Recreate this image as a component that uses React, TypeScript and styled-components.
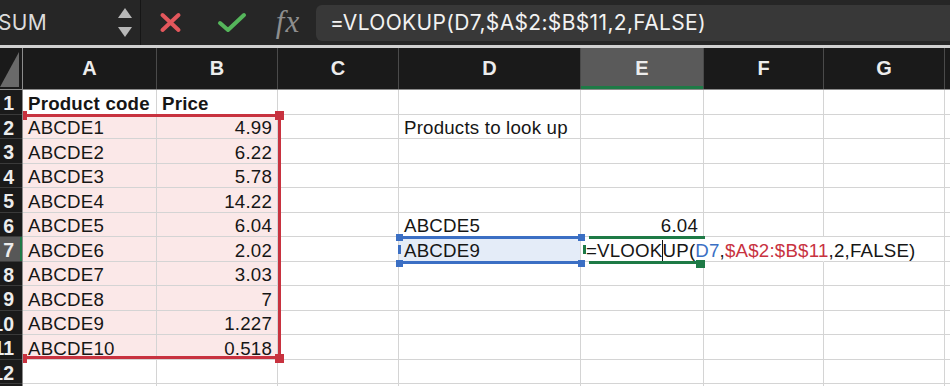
import React from 'react';
import styled, { createGlobalStyle, css } from 'styled-components';

const GlobalStyle = createGlobalStyle`
  html, body {
    margin: 0;
    padding: 0;
    background: #ffffff;
    overflow: hidden;
  }
  * {
    box-sizing: border-box;
  }
`;

const COL_WIDTHS = [134, 121, 121, 182, 123, 120, 121, 121];
const COL_NAMES = ['A', 'B', 'C', 'D', 'E', 'F', 'G', 'H'];
const ROW_H = 24.5;
const ROW_COUNT = 13;

const RED = '#c8323f';
const BLUE = '#3b6fc4';
const GREEN = '#1e7a46';

const cellFont = `"Liberation Sans", Arial, Helvetica, sans-serif`;

const Window = styled.div`
  width: 950px;
  height: 386px;
  overflow: hidden;
  display: flex;
  flex-direction: column;
  background: #ffffff;
`;

/* ---------- formula toolbar ---------- */

const Toolbar = styled.div`
  height: 45px;
  flex: none;
  display: flex;
  align-items: center;
  background: #262626;
  border-bottom: 3px solid #d0d0d0;
  box-sizing: content-box;
`;

const NameBox = styled.div`
  width: 141px;
  height: 100%;
  display: flex;
  align-items: center;
  justify-content: space-between;
  padding-right: 8px;
  border-right: 1px solid #161616;
`;

const NameText = styled.span`
  margin-left: -2px;
  font-family: Inter, "Liberation Sans", sans-serif;
  font-size: 21px;
  letter-spacing: 0.3px;
  color: #dcdcdc;
`;

const Stepper = styled.div`
  display: flex;
  flex-direction: column;
  gap: 9px;
`;

const Arrow = styled.span<{ $down?: boolean }>`
  width: 0;
  height: 0;
  border-left: 7.5px solid transparent;
  border-right: 7.5px solid transparent;
  ${(p) =>
    p.$down
      ? css`border-top: 10px solid #b8b8b8;`
      : css`border-bottom: 10px solid #b8b8b8;`}
`;

const IconSlot = styled.div<{ $w: number }>`
  width: ${(p) => p.$w}px;
  height: 100%;
  display: flex;
  align-items: center;
  justify-content: center;
  flex: none;
`;

const FxLabel = styled.span`
  font-family: "Liberation Serif", "Times New Roman", serif;
  font-style: italic;
  font-size: 31px;
  color: #8e8e8e;
  letter-spacing: 1px;
  line-height: 1;
  margin-top: -2px;
`;

const FormulaInput = styled.div`
  flex: 1;
  height: 36px;
  margin-left: 4px;
  display: flex;
  align-items: center;
  padding-left: 14px;
  background: #383838;
  border-radius: 6px 0 0 6px;
  font-family: Inter, "Liberation Sans", sans-serif;
  font-size: 21px;
  letter-spacing: 0.35px;
  color: #f2f2f2;
  white-space: nowrap;
`;

/* ---------- column header ---------- */

const HeaderRow = styled.div`
  height: 42px;
  flex: none;
  display: grid;
  grid-template-columns: 23px ${COL_WIDTHS.map((w) => `${w}px`).join(' ')};
  background: #1a1a1a;
  border-bottom: 1px solid #8c8c8c;
`;

const Corner = styled.div`
  position: relative;
  border-right: 1px solid #8c8c8c;

  &::after {
    content: '';
    position: absolute;
    left: 0;
    right: 3px;
    top: 4px;
    bottom: 2px;
    background: #6a6a6a;
    clip-path: polygon(100% 0, 100% 100%, 0 100%);
  }
`;

const ColumnHeader = styled.div<{ $active?: boolean }>`
  display: flex;
  align-items: center;
  justify-content: center;
  border-right: 1px solid #4a4a4a;
  font-family: ${cellFont};
  font-weight: 700;
  font-size: 20px;
  color: #ececec;
  overflow: hidden;
  ${(p) =>
    p.$active &&
    css`
      background: #5a5a5a;
      box-shadow: inset 0 -3px 0 ${GREEN};
    `}
`;

/* ---------- sheet body ---------- */

const Body = styled.div`
  flex: 1;
  display: flex;
  overflow: hidden;
`;

const RowHeaderColumn = styled.div`
  width: 23px;
  flex: none;
  background: #1a1a1a;
  border-right: 1px solid #8c8c8c;
`;

const RowHeader = styled.div<{ $active?: boolean }>`
  height: ${ROW_H}px;
  display: flex;
  align-items: flex-end;
  justify-content: flex-end;
  padding-right: 8px;
  border-bottom: 1px solid #3a3a3a;
  font-family: ${cellFont};
  font-weight: 700;
  font-size: 19.5px;
  line-height: 1;
  color: #ececec;
  white-space: nowrap;
  overflow: hidden;
  ${(p) =>
    p.$active &&
    css`
      background: #575757;
      box-shadow: inset -2px 0 0 ${GREEN};
    `}
`;

const CellArea = styled.div`
  position: relative;
  flex: 1;
  overflow: hidden;
  display: grid;
  grid-template-columns: ${COL_WIDTHS.map((w) => `${w}px`).join(' ')};
  grid-auto-rows: ${ROW_H}px;
`;

type Tint = 'pink' | 'blue';

const Cell = styled.div<{ $right?: boolean; $bold?: boolean; $tint?: Tint; $noLine?: boolean }>`
  display: flex;
  align-items: flex-end;
  justify-content: ${(p) => (p.$right ? 'flex-end' : 'flex-start')};
  padding: 0 5px;
  border-bottom: 1px solid #d4d4d4;
  border-right: 1px solid ${(p) => (p.$noLine ? 'transparent' : '#d4d4d4')};
  background: ${(p) =>
    p.$tint === 'pink' ? '#fbe8e8' : p.$tint === 'blue' ? '#e4ecf8' : 'transparent'};
  font-family: ${cellFont};
  font-size: 18.7px;
  letter-spacing: 0.2px;
  font-weight: ${(p) => (p.$bold ? 700 : 400)};
  line-height: 1;
  color: #161616;
  min-width: 0;
`;

const CellText = styled.span`
  display: block;
  white-space: nowrap;
  position: relative;
  z-index: 1;
`;

const Ref = styled.span<{ $c: string }>`
  color: ${(p) => p.$c};
`;

const Caret = styled.span`
  display: inline-block;
  width: 1.5px;
  height: 21px;
  margin: 0 -0.75px;
  vertical-align: -4px;
  background: #111111;
`;

/* ---------- reference highlights lying over the cells ---------- */

const RangeBox = styled.div<{
  $x: number;
  $y: number;
  $w: number;
  $h: number;
  $color: string;
  $right?: boolean;
}>`
  position: absolute;
  left: ${(p) => p.$x}px;
  top: ${(p) => p.$y}px;
  width: ${(p) => p.$w}px;
  height: ${(p) => p.$h}px;
  border-top: 3px solid ${(p) => p.$color};
  border-bottom: 3px solid ${(p) => p.$color};
  border-right: ${(p) => (p.$right ? `3px solid ${p.$color}` : 'none')};
  pointer-events: none;
  z-index: 2;
`;

const Handle = styled.div<{ $x: number; $y: number; $w: number; $h: number; $color: string }>`
  position: absolute;
  left: ${(p) => p.$x}px;
  top: ${(p) => p.$y}px;
  width: ${(p) => p.$w}px;
  height: ${(p) => p.$h}px;
  background: ${(p) => p.$color};
  z-index: 3;
`;

type CellDef = {
  text: React.ReactNode;
  right?: boolean;
  bold?: boolean;
};

const prices = ['4.99', '6.22', '5.78', '14.22', '6.04', '2.02', '3.03', '7', '1.227', '0.518'];

const cells: Record<string, CellDef> = {
  A1: { text: 'Product code', bold: true },
  B1: { text: 'Price', bold: true },
  D2: { text: 'Products to look up' },
  D6: { text: 'ABCDE5' },
  E6: { text: '6.04', right: true },
  D7: { text: 'ABCDE9' },
  E7: {
    text: (
      <>
        =VLOOK
        <Caret />
        UP(<Ref $c={BLUE}>D7</Ref>,<Ref $c={RED}>$A$2:$B$11</Ref>,2,FALSE)
      </>
    ),
  },
};

prices.forEach((price, i) => {
  cells[`A${i + 2}`] = { text: `ABCDE${i + 1}` };
  cells[`B${i + 2}`] = { text: price, right: true };
});

const spillCells = new Set(['E7', 'F7']);

const XIcon = () => (
  <svg width="23" height="21" viewBox="0 0 23 21">
    <path d="M3.5 3 L19.5 18 M19.5 3 L3.5 18" stroke="#e3575c" strokeWidth="4" strokeLinecap="round" />
  </svg>
);

const CheckIcon = () => (
  <svg width="30" height="21" viewBox="0 0 30 21">
    <path
      d="M3 11 L11 18 L27 3"
      stroke="#55b65b"
      strokeWidth="4"
      fill="none"
      strokeLinecap="round"
      strokeLinejoin="round"
    />
  </svg>
);

const App = () => {
  const rows = Array.from({ length: ROW_COUNT }, (_, i) => i + 1);

  return (
    <>
      <GlobalStyle />
      <Window>
        <Toolbar>
          <NameBox>
            <NameText>SUM</NameText>
            <Stepper>
              <Arrow />
              <Arrow $down />
            </Stepper>
          </NameBox>
          <IconSlot $w={59}>
            <XIcon />
          </IconSlot>
          <IconSlot $w={64}>
            <CheckIcon />
          </IconSlot>
          <IconSlot $w={48}>
            <FxLabel>fx</FxLabel>
          </IconSlot>
          <FormulaInput>=VLOOKUP(D7,$A$2:$B$11,2,FALSE)</FormulaInput>
        </Toolbar>

        <HeaderRow>
          <Corner />
          {COL_NAMES.map((name) => (
            <ColumnHeader key={name} $active={name === 'E'}>
              {name}
            </ColumnHeader>
          ))}
        </HeaderRow>

        <Body>
          <RowHeaderColumn>
            {rows.map((r) => (
              <RowHeader key={r} $active={r === 7}>
                {r}
              </RowHeader>
            ))}
          </RowHeaderColumn>

          <CellArea>
            {rows.map((r) =>
              COL_NAMES.map((col, c) => {
                const id = `${col}${r}`;
                const def = cells[id];
                const tint: Tint | undefined =
                  c <= 1 && r >= 2 && r <= 11 ? 'pink' : id === 'D7' ? 'blue' : undefined;
                return (
                  <Cell
                    key={id}
                    $right={def?.right}
                    $bold={def?.bold}
                    $tint={tint}
                    $noLine={spillCells.has(id)}
                  >
                    {def && <CellText>{def.text}</CellText>}
                  </Cell>
                );
              })
            )}

            {/* A2:B11 reference */}
            <RangeBox $x={0} $y={24} $w={258} $h={245} $color={RED} $right />
            <Handle $x={-5} $y={21} $w={9} $h={9} $color={RED} />
            <Handle $x={252} $y={21} $w={9} $h={9} $color={RED} />
            <Handle $x={-5} $y={264} $w={9} $h={9} $color={RED} />
            <Handle $x={252} $y={264} $w={9} $h={9} $color={RED} />

            {/* D7 reference */}
            <RangeBox $x={376} $y={146} $w={182} $h={28} $color={BLUE} />
            <Handle $x={372.5} $y={143.5} $w={7} $h={7} $color={BLUE} />
            <Handle $x={554.5} $y={143.5} $w={7} $h={7} $color={BLUE} />
            <Handle $x={372.5} $y={169.5} $w={7} $h={7} $color={BLUE} />
            <Handle $x={554.5} $y={169.5} $w={7} $h={7} $color={BLUE} />
            <Handle $x={375} $y={155} $w={2.5} $h={9} $color={BLUE} />

            {/* active cell E7 */}
            <RangeBox $x={566} $y={146} $w={116} $h={28} $color={GREEN} />
            <Handle $x={673} $y={169.5} $w={9} $h={8} $color={GREEN} />
            <Handle $x={560} $y={155} $w={2.5} $h={9} $color={GREEN} />
          </CellArea>
        </Body>
      </Window>
    </>
  );
};

export default App;
